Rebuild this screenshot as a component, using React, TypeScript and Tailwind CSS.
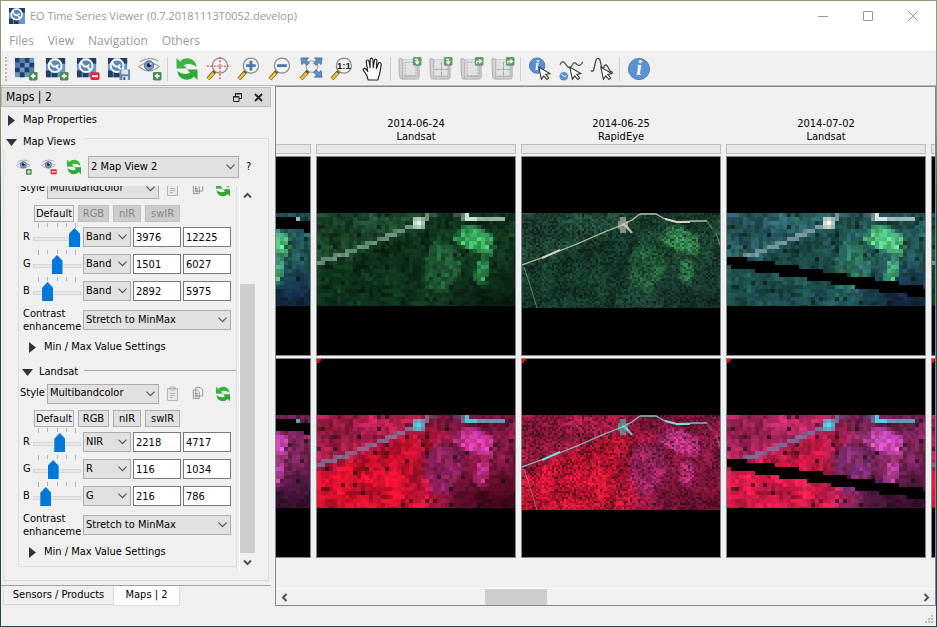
import React from "react";

/* ---------- satellite scenes ---------- */

type RGB = [number, number, number];
type Palette = "green" | "blue" | "pink" | "rose" | "fineGreen" | "finePink";

function hash(x: number, y: number, seed: number): number {
  let h = Math.imul(x + 11, 374761393) ^ Math.imul(y + 7, 668265263) ^ Math.imul(seed, 1274126177);
  h = Math.imul(h ^ (h >>> 13), 1103515245);
  h = Math.imul(h ^ (h >>> 15), 2246822519);
  return ((h ^ (h >>> 16)) >>> 0) / 4294967296;
}

function smooth(x: number, y: number, seed: number): number {
  const ix = Math.floor(x);
  const iy = Math.floor(y);
  const fx = x - ix;
  const fy = y - iy;
  const top = hash(ix, iy, seed) * (1 - fx) + hash(ix + 1, iy, seed) * fx;
  const low = hash(ix, iy + 1, seed) * (1 - fx) + hash(ix + 1, iy + 1, seed) * fx;
  return top * (1 - fy) + low * fy;
}

const mix = (a: RGB, b: RGB, t: number): RGB => [
  a[0] + (b[0] - a[0]) * t,
  a[1] + (b[1] - a[1]) * t,
  a[2] + (b[2] - a[2]) * t,
];

const clamp01 = (v: number) => Math.max(0, Math.min(1, v));

const ROAD: number[][] = [
  [0, 50], [22, 43], [60, 28], [80, 19], [100, 11], [114, 2], [126, -2], [134, -1],
  [150, 5], [160, 7], [185, 6],
];

const BRIGHT_FIELD: number[][] = [[137, 26], [148, 14], [160, 12], [170, 20], [178, 24], [178, 39], [166, 41], [155, 37], [144, 31]];
const LARGE_FIELD: number[][] = [[113, 33], [126, 27], [142, 34], [146, 52], [138, 66], [130, 80], [118, 78], [108, 62], [107, 46]];
const SMALL_FIELD: number[][] = [[160, 48], [171, 46], [172, 62], [167, 72], [158, 68]];

function polylineDistance(points: number[][], x: number, y: number, closed: boolean): number {
  let best = 999;
  const count = closed ? points.length : points.length - 1;
  for (let i = 0; i < count; i++) {
    const [ax, ay] = points[i];
    const [bx, by] = points[(i + 1) % points.length];
    const l = (bx - ax) ** 2 + (by - ay) ** 2;
    const t = clamp01(((x - ax) * (bx - ax) + (y - ay) * (by - ay)) / l);
    best = Math.min(best, Math.hypot(x - ax - t * (bx - ax), y - ay - t * (by - ay)));
  }
  return best;
}

/* 1 inside the field, falling to 0 over a few pixels around its edge */
function cover(points: number[][], x: number, y: number): number {
  let inside = false;
  for (let i = 0, j = points.length - 1; i < points.length; j = i++) {
    const [ax, ay] = points[i];
    const [bx, by] = points[j];
    if (ay > y !== by > y && x < ((bx - ax) * (y - ay)) / (by - ay) + ax) inside = !inside;
  }
  const d = polylineDistance(points, x, y, true);
  return clamp01(0.5 + (inside ? d : -d) / 5);
}

interface Colors {
  top: RGB; low: RGB; right: RGB; corner: RGB; field: RGB; bright: RGB; road: RGB; spot: RGB; noise: number;
}

const COLORS: Record<Palette, Colors> = {
  green: { top: [26, 66, 42], low: [14, 50, 26], right: [16, 50, 28], corner: [10, 32, 18], field: [34, 96, 56], bright: [64, 184, 104], road: [118, 156, 132], spot: [235, 245, 240], noise: 0.5 },
  blue: { top: [38, 88, 92], low: [28, 78, 76], right: [32, 82, 82], corner: [18, 44, 68], field: [48, 118, 100], bright: [88, 210, 140], road: [130, 160, 165], spot: [250, 252, 235], noise: 0.4 },
  pink: { top: [162, 28, 70], low: [214, 16, 46], right: [122, 22, 62], corner: [72, 8, 30], field: [142, 34, 98], bright: [224, 60, 170], road: [136, 112, 148], spot: [60, 230, 240], noise: 0.38 },
  rose: { top: [165, 36, 88], low: [212, 26, 70], right: [116, 34, 84], corner: [60, 18, 50], field: [128, 46, 118], bright: [216, 78, 190], road: [120, 116, 156], spot: [70, 235, 250], noise: 0.36 },
  fineGreen: { top: [30, 66, 50], low: [22, 58, 42], right: [26, 62, 46], corner: [22, 48, 40], field: [36, 92, 58], bright: [52, 130, 78], road: [40, 80, 54], spot: [200, 200, 185], noise: 0.6 },
  finePink: { top: [144, 24, 60], low: [194, 20, 50], right: [128, 22, 60], corner: [106, 16, 48], field: [152, 36, 96], bright: [188, 52, 126], road: [150, 34, 68], spot: [70, 200, 185], noise: 0.55 },
};

function sceneColor(palette: Palette, fine: boolean, x: number, y: number, px: number, py: number): RGB {
  const c = COLORS[palette];
  const roadY = 50 - px * 0.39;
  let col = mix(c.top, c.low, clamp01((py - roadY) / 14));
  col = mix(col, c.right, clamp01((px - 90) / 45));
  col = mix(col, c.corner, clamp01((px - 110) / 60) * clamp01((py - 48) / 30));
  const wx = px + (smooth(px / 6, py / 6, 21) - 0.5) * 5;
  const wy = py + (smooth(px / 6, py / 6, 22) - 0.5) * 5;
  col = mix(col, c.field, cover(LARGE_FIELD, wx, wy) * 0.85);
  col = mix(col, c.bright, cover(BRIGHT_FIELD, wx, wy));
  col = mix(col, c.bright, cover(SMALL_FIELD, wx, wy) * 0.6);
  const n = 1 + c.noise * (hash(x, y, 3) - 0.5) + 0.55 * (smooth(px / 11, py / 11, 9) - 0.5);
  col = [col[0] * n, col[1] * (n + 0.12 * (hash(x, y, 8) - 0.5)), col[2] * (n + 0.3 * (hash(x, y, 6) - 0.5))];
  if (fine) {
    if (hash(x, y, 31) > 0.94) col = mix(col, [8, 20, 18], 0.6);
    if (Math.hypot((px - 101) / 5, (py - 12) / 8) < 1) col = mix(col, c.spot, 0.6);
    return col;
  }
  if (hash(x, y, 31) > 0.95) col = mix(col, [8, 16, 14], 0.6);
  const d = polylineDistance(ROAD, px, py, false);
  const fade = 0.75 + 0.25 * hash(x, y, 14);
  if (d < 2.4) col = mix(col, c.road, (px > 112 && px < 144 ? 0.45 : 0.95) * fade);
  if (d < 3 && px > 146 && px < 190) col = mix(c.road, c.spot, px < 160 ? 0.75 : 0.3 * fade);
  const spot = Math.hypot(px - 101, py - 10);
  if (spot < 6.5) col = mix(c.road, c.spot, clamp01(1.1 - spot / 7));
  return col;
}

function scenePaths(palette: Palette, w: number, h: number, cell: number, stripe?: number) {
  const fine = palette === "fineGreen" || palette === "finePink";
  const groups = new Map<string, string>();
  for (let y = 0; y < h; y += cell) {
    for (let x = 0; x < w; x += cell) {
      const px = x + cell / 2;
      const py = y + cell / 2;
      const hidden = stripe !== undefined && Math.abs(py - stripe - px * 0.16) < 5.5;
      const col: RGB = hidden ? [0, 0, 0] : sceneColor(palette, fine, x, y, px, py);
      const q = col.map((v) => Math.min(255, Math.max(0, Math.round(v / 6) * 6)));
      const key = `rgb(${q[0]},${q[1]},${q[2]})`;
      groups.set(key, (groups.get(key) ?? "") + `M${x} ${y}h${cell}v${cell}h-${cell}z`);
    }
  }
  return [...groups.entries()];
}

function Scene({ palette, stripe }: { palette: Palette; stripe?: number }) {
  const fine = palette === "fineGreen" || palette === "finePink";
  const h = fine ? 95 : 93;
  const paths = scenePaths(palette, 198, h, fine ? 2 : 4, stripe);
  const line = palette === "fineGreen" ? "#d5d3bd" : "#7fd8d4";
  return (
    <svg width="198" height={h} viewBox={`0 0 198 ${h}`} className="block shrink-0" aria-hidden="true">
      <g shapeRendering="crispEdges">
        {paths.map(([fill, d]) => <path key={fill} d={d} fill={fill} />)}
      </g>
      {fine && (
        <g fill="none" stroke={line}>
          <path d="M0 52L22 44L37 38L55 31L80 20L100 12L110 7L118 1L134 1L141 5L155 9L172 8L185 8" strokeWidth="1.3" opacity=".85" />
          <path d="M20 45L38 37M143 6L155 9L168 9" strokeWidth="2" />
          <path d="M185 8L190 16M194 20L198 32M2 54L8 72L15 95" strokeWidth="1" opacity=".45" />
          <path d="M100 11L104 13L110 20" strokeWidth="2.5" opacity=".8" />
        </g>
      )}
    </svg>
  );
}

function MapTile({ palette, stripe, marker }: { palette: Palette; stripe?: number; marker?: boolean }) {
  return (
    <div className="relative h-50 w-50 shrink-0 overflow-hidden border border-[#828790] bg-black pt-14">
      <Scene palette={palette} stripe={stripe} />
      {marker && (
        <svg className="absolute top-0 left-0" width="4" height="4" aria-hidden="true">
          <path d="M0 0h4v2h-2v2h-2z" fill="#f00" />
        </svg>
      )}
    </div>
  );
}

interface Column { date?: string; sensor?: string; upper: Palette; lower: Palette; stripe?: number }

const COLUMNS: Column[] = [
  { date: "2014-06-24", sensor: "Landsat", upper: "green", lower: "pink" },
  { date: "2014-06-25", sensor: "RapidEye", upper: "fineGreen", lower: "finePink" },
  { date: "2014-07-02", sensor: "Landsat", upper: "blue", lower: "rose", stripe: 48 },
];

function MapColumn({ column }: { column: Column }) {
  return (
    <section className="flex w-50 shrink-0 flex-col">
      <header className="h-[26px] text-center leading-[13px]">
        <div>{column.date}</div>
        <div>{column.sensor}</div>
      </header>
      <div className="mt-px mb-0.5 h-2.5 border border-[#bcbcbc] bg-[#e6e6e6]" />
      <div className="flex flex-col gap-0.5">
        <MapTile palette={column.upper} stripe={column.stripe} />
        <MapTile palette={column.lower} stripe={column.stripe} marker />
      </div>
    </section>
  );
}

/* ---------- icons ---------- */

const Plus = () => (
  <g>
    <rect x="15.5" y="15.5" width="9" height="9" rx="1.5" fill="#4e8a53" />
    <path d="M20 17.5v5M17.5 20h5" stroke="#fff" strokeWidth="1.8" />
  </g>
);
const Minus = () => (
  <g>
    <rect x="15" y="16" width="9.5" height="8" rx="1.5" fill="#e8213a" />
    <path d="M16.8 20h6" stroke="#fff" strokeWidth="2" />
  </g>
);
const Checker = () => (
  <g>
    <rect x="1" y="1" width="20" height="20" fill="#6997c9" />
    <path d="M1 1h5v5H1zM11 1h5v5h-5zM6 6h5v5H6zM16 6h5v5h-5zM1 11h5v5H1zM11 11h5v5h-5zM6 16h5v5H6z" fill="#233f63" />
    <path d="M6 1h5v5H6zM1 6h5v5H1zM16 11h5v5h-5z" fill="#4f7db3" />
  </g>
);
const Clock = () => (
  <g>
    <rect x="1" y="1" width="20" height="20" fill="#6997c9" />
    <path d="M1 1h6v6H1zM14 1h7v6h-7zM1 14h5v7H1zM7 16h6v5H7z" fill="#233f63" />
    <circle cx="10.5" cy="9" r="6.7" fill="#5688bf" stroke="#fff" strokeWidth="2" />
    <path d="M5.500 5.500q2 5 6 4.500l2.500-2M11.500 10l3 3" fill="none" stroke="#fff" strokeWidth="2" />
  </g>
);
const Eye = () => (
  <g>
    <path d="M1 10Q11 2 22 10Q11 19 1 10z" fill="#fafafa" stroke="#929292" strokeWidth="1.1" />
    <path d="M2 5Q11-1 21 4" fill="none" stroke="#a2a2a2" strokeWidth="1.3" />
    <circle cx="11.5" cy="9" r="5" fill="#7599c4" stroke="#4b6d96" />
    <circle cx="11.5" cy="8.5" r="2.2" fill="#17243a" />
    <circle cx="13" cy="7" r="1" fill="#fff" />
  </g>
);
const Refresh = ({ size = 24 }: { size?: number }) => (
  <svg width={size} height={size} viewBox="0 0 24 24" aria-hidden="true">
    <path d="M1.500 1v10.500h10.500l-3-3c3.500-2.500 8.500-1.500 12.500 1.500C21.500 2 11-2 5 4.500z" fill="#3cb53c" />
    <path d="M22.500 23V12.500h-10.500l3 3c-3.500 2.500-8.500 1.500-12.500-1.500C2.500 22 13 26 19 19.500z" fill="#2fa836" />
  </svg>
);
const Lens = ({ children }: { children?: React.ReactNode }) => (
  <g>
    <path d="M9.500 14.500L2 23" stroke="#5c5030" strokeWidth="4" />
    <path d="M8 16.500L2 23" stroke="#f4c430" strokeWidth="2.6" />
    <circle cx="14.500" cy="9" r="7.900" fill="#f3f3f3" fillOpacity=".9" stroke="#8d8d8d" strokeWidth="1.300" />
    {children}
  </g>
);
const Cursor = () => <path d="M12.500 9.500v13l3.200-2.800 2.300 4.300 2.200-1.200-2.200-4.200h4.300z" fill="#fff" stroke="#333" strokeWidth="1.1" transform="rotate(-12 16 16)" />;
const Info = () => (
  <g>
    <circle cx="9.500" cy="9" r="8" fill="#5b90cf" stroke="#4677b2" />
    <text x="9.500" y="14" textAnchor="middle" fontFamily="Liberation Serif, serif" fontStyle="italic" fontWeight="bold" fontSize="15" fill="#fff">i</text>
  </g>
);
const Scroll = ({ grid, out }: { grid?: boolean; out?: boolean }) => (
  <g>
    <g opacity=".75">
      <path d="M2 3h14v18.500H4.500z" fill="#dedede" stroke="#aaa" />
      <path d="M1 4Q0 1.500 3 1.500Q6 2 5 6V20Q5 23 3 23Q1 22 1 4z" fill="#c9c9c9" stroke="#979797" />
      <path d="M6 3h14v17H6z" fill="#dedede" />
      <path d="M4 23h16q2 0 2-2V7h-2v13H6" fill="#c4c4c4" stroke="#999" />
      {grid
        ? <path d="M13 5v16M6 13h15" stroke="#888" strokeDasharray="4 1" />
        : <path d="M7.500 5v14M18.500 10v9M8 5.500h8M8 19.500h11" stroke="#888" strokeDasharray="1.500 1.500" />}
    </g>
    <rect x="15.500" y="0" width="9" height="9" rx="1.500" fill="#5f9c66" />
    <path d={out ? "M17.500 7V4.500H21M20 2.500l2.500 2L20 6.500" : "M17.500 2.500H20V6M18 4.500l2 2.500 2-2.500"} fill="none" stroke="#fff" strokeWidth="1.300" />
  </g>
);
const Floppy = () => (
  <g>
    <rect x="13" y="13" width="11" height="11" fill="#6386b0" />
    <path d="M15 13h7v5h-7zM16 20h6v4h-6z" fill="#dce3ec" />
    <path d="M17 21h2v3h-2z" fill="#555" />
  </g>
);
const FullExtent = () => (
  <g>
    <path d="M10 14L2 23" stroke="#5c5030" strokeWidth="4" />
    <path d="M8 16.500L2 23" stroke="#f4c430" strokeWidth="2.600" />
    <circle cx="13.500" cy="10" r="6" fill="#eee" stroke="#999" />
    <g fill="#5d8dc4" stroke="#40699b" strokeWidth=".8">
      <path d="M2 1h8L7.800 3.200l3 3-2.600 2.600-3-3L3 8z" />
      <path d="M24 1h-8l2.200 2.200-3 3 2.600 2.600 3-3L23 8z" />
      <path d="M24 21h-8l2.200-2.200-3-3 2.600-2.600 3 3L23 14z" />
    </g>
  </g>
);
const Hand = () => (
  <path
    d="M7.500 24L6 19 2.500 14C1.500 12 4 11 5.500 13L7 15 5.500 5C5.500 2.500 8 2.500 8.500 5L9.500 11 9.500 3C9.500.5 12 .5 12.500 3L12.800 11 14 3.500C14.500 1.500 17 2 16.500 4.500L16 12 18 7C19 5 21.500 6 21 8.500L19.500 17 17.500 24z"
    fill="#fff" stroke="#222" strokeWidth="1.200" strokeLinejoin="round"
  />
);

function Icon({ children, size = 24 }: { children: React.ReactNode; size?: number }) {
  return <svg width={size} height={size} viewBox="0 0 25 25" aria-hidden="true">{children}</svg>;
}

const GROUPS: { label: string; icon: React.ReactNode }[][] = [
  [
    { label: "Add raster", icon: <Icon><Checker /><Plus /></Icon> },
    { label: "Add time series", icon: <Icon><Clock /><Plus /></Icon> },
    { label: "Remove time series", icon: <Icon><Clock /><Minus /></Icon> },
    { label: "Save time series", icon: <Icon><Clock /><Floppy /></Icon> },
    { label: "Add map view", icon: <Icon><Eye /><Plus /></Icon> },
  ],
  [
    { label: "Refresh", icon: <Refresh /> },
    { label: "Center map", icon: <Icon><Lens /><path d="M14.500 0v24M1 9.500h24" stroke="#f04545" strokeWidth="1.400" strokeDasharray="2 1.500" /></Icon> },
    { label: "Zoom in", icon: <Icon><Lens><path d="M14.500 4v10M9.500 9h10" stroke="#4578ae" strokeWidth="3" /></Lens></Icon> },
    { label: "Zoom out", icon: <Icon><Lens><path d="M9.500 9h10" stroke="#4578ae" strokeWidth="3" /></Lens></Icon> },
    { label: "Full extent", icon: <Icon><FullExtent /></Icon> },
    { label: "Pixel scale", icon: <Icon><Lens><text x="14.500" y="12.500" textAnchor="middle" fontFamily="Liberation Sans, sans-serif" fontWeight="bold" fontSize="10" fill="#222">1:1</text></Lens></Icon> },
    { label: "Pan", icon: <Icon><Hand /></Icon> },
  ],
  [
    { label: "Import extent", icon: <Icon><Scroll /></Icon> },
    { label: "Import grid", icon: <Icon><Scroll grid /></Icon> },
    { label: "Export extent", icon: <Icon><Scroll out /></Icon> },
    { label: "Export grid", icon: <Icon><Scroll grid out /></Icon> },
  ],
  [
    { label: "Identify", icon: <Icon><Info /><Cursor /></Icon> },
    { label: "Temporal profile", icon: <Icon><path d="M1 8c3-6 5-2 7 1s4 3 6-1 4-1 5 0 3 2 6-3" fill="none" stroke="#555" strokeWidth="1.300" /><circle cx="5" cy="20" r="4.500" fill="#5b90cf" /><path d="M2.500 18l3 2.500 2-1" stroke="#fff" fill="none" /><Cursor /></Icon> },
    { label: "Spectral profile", icon: <Icon><path d="M1 14q2 2 3-1l2-9q1-4 4-2l2 8q2 3 3-1 2-2 4 2l2 4 3 1" fill="none" stroke="#444" strokeWidth="1.300" /><Cursor /></Icon> },
  ],
  [
    { label: "About", icon: <Icon><circle cx="12.500" cy="12.500" r="11" fill="#5b93d2" stroke="#4779b4" /><text x="12.500" y="19" textAnchor="middle" fontFamily="Liberation Serif, serif" fontStyle="italic" fontWeight="bold" fontSize="21" fill="#fff">i</text></Icon> },
  ],
];

/* ---------- controls ---------- */

function Select({ label, value, className }: { label: string; value: string; className: string }) {
  return (
    <div className={`relative shrink-0 ${className}`}>
      <select aria-label={label} defaultValue={value} className="block h-full w-full appearance-none border border-[#adadad] bg-[#e1e1e1] pl-0.5 pr-4 text-black outline-none">
        <option>{value}</option>
      </select>
      <svg className="pointer-events-none absolute top-1/2 right-1 -translate-y-1/2" width="9" height="6" viewBox="0 0 9 6" aria-hidden="true">
        <path d="M.5.7L4.500 4.700 8.500.7" fill="none" stroke="#555" strokeWidth="1.200" />
      </svg>
    </div>
  );
}

function Triangle({ open }: { open?: boolean }) {
  return (
    <svg width="11" height="11" viewBox="0 0 11 11" aria-hidden="true" className="shrink-0">
      <path d={open ? "M0 2h11L5.500 9z" : "M2 0v11l7-5.500z"} fill="#333" />
    </svg>
  );
}

interface Band { channel: string; band: string; min: string; max: string; pos: number }

function BandRow({ row, sensor }: { row: Band; sensor: string }) {
  const id = `${sensor}-${row.channel}`;
  const field = "h-5 w-12 shrink-0 border border-[#7a7a7a] bg-white px-0.5 outline-none";
  return (
    <div className="flex h-5 items-center gap-0.5 pl-1">
      <label htmlFor={id} className="w-2">{row.channel}</label>
      <div className="relative h-5 w-12">
        <svg className="absolute -top-1 left-0" width="48" height="6" aria-hidden="true">
          <path d="M5.500 0v5M14.500 0v4M24.500 0v4M33.500 0v4M42.500 0v5" stroke="#b8b4a8" />
        </svg>
        <input
          id={id}
          type="range"
          min={0}
          max={100}
          defaultValue={row.pos}
          className="absolute top-0.5 left-0 m-0 h-5 w-12 appearance-none bg-transparent [&::-webkit-slider-runnable-track]:h-1 [&::-webkit-slider-runnable-track]:border [&::-webkit-slider-runnable-track]:border-[#d6d6d6] [&::-webkit-slider-runnable-track]:bg-[#e7eaea] [&::-webkit-slider-thumb]:-mt-2.5 [&::-webkit-slider-thumb]:h-[19px] [&::-webkit-slider-thumb]:w-[11px] [&::-webkit-slider-thumb]:appearance-none [&::-webkit-slider-thumb]:bg-[#0078d7] [&::-webkit-slider-thumb]:[clip-path:polygon(50%_0,100%_30%,100%_100%,0_100%,0_30%)]"
        />
      </div>
      <Select label={`${id} band`} value={row.band} className="h-5 w-12" />
      <input aria-label={`${id} minimum`} defaultValue={row.min} className={field} />
      <input aria-label={`${id} maximum`} defaultValue={row.max} className={field} />
    </div>
  );
}

function SensorSection({ name, rows, presets }: { name: string; rows: Band[]; presets: boolean }) {
  return (
    <section className={`flex shrink-0 flex-col border-x border-[#dcdcdc] pb-1 ${presets ? "border-b" : "mb-px"}`}>
      <div className="flex h-5 items-center gap-1.5 pl-[3px]">
        <Triangle open />
        <h3>{name}</h3>
        <div className="mb-1 h-px flex-1 bg-[#a9a9a9]" />
      </div>
      <div className="mt-px flex h-[21px] items-center pl-px">
        <span className="w-[27px]">Style</span>
        <Select label={`${name} style`} value="Multibandcolor" className="h-5 w-28" />
        <div className="ml-1.5 flex items-center gap-[9px]">
          <button aria-label="Paste style" className="flex h-4 w-4 justify-center">
            <svg width="14" height="16" viewBox="0 0 14 16"><path d="M1.500 2.500h10v12h-10zM4 1h5v3H4zM4 7.500h5M4 9.500h5M4 11.500h3" fill="#e8e8e8" stroke="#b4b4b4" /></svg>
          </button>
          <button aria-label="Copy style" className="flex h-4 w-4 justify-center">
            <svg width="12" height="14" viewBox="0 0 14 16"><path d="M4.500 1.500h5l3 3v7h-8zM1.500 4.500h5l2 2v8h-7zM3 8.500h4M3 10.500h4M3 12.500h4" fill="#f4f4f4" stroke="#8b8b8b" /></svg>
          </button>
          <button aria-label="Refresh style" className="h-4 w-4"><Refresh size={16} /></button>
        </div>
      </div>
      <div className="mt-1.5 flex h-[17px] gap-1 pl-[15px]">
        <button className="w-10 border border-[#adadad] bg-[#eee] leading-[15px]">Default</button>
        {[["RGB", "w-[31px]"], ["nIR", "w-7"], ["swIR", "w-[35px]"]].map(([text, width]) => (
          <button key={text} disabled={!presets} className={`border border-[#adadad] bg-[#e1e1e1] leading-[15px] disabled:border-[#bfbfbf] disabled:bg-[#ccc] disabled:text-[#838383] ${width}`}>{text}</button>
        ))}
      </div>
      <div className="mt-[5px] flex flex-col gap-[7px]">
        {rows.map((row) => <BandRow key={row.channel} row={row} sensor={name} />)}
      </div>
      <div className="mt-[7px] flex h-6 items-center gap-0.5 pl-1">
        <div className="w-[58px] shrink-0 overflow-hidden leading-[13px]">Contrast<br />enhancement</div>
        <Select label={`${name} contrast enhancement`} value="Stretch to MinMax" className="h-5 w-37" />
      </div>
      <button className="mt-[5px] flex h-5 items-center gap-1.5 pl-2"><Triangle />Min / Max Value Settings</button>
    </section>
  );
}

function Arrow({ d }: { d: string }) {
  return <svg width="9" height="9" viewBox="0 0 9 9" aria-hidden="true"><path d={d} fill="none" stroke="#505050" strokeWidth="2" /></svg>;
}

function MapsPanel() {
  return (
    <aside className="flex w-[270px] shrink-0 flex-col pt-px">
      <div className="flex h-5 shrink-0 items-center border border-[#bcbcbc] bg-[#d9d9d9] pl-1 text-[12px]">
        <h2 className="flex-1">Maps | 2</h2>
        <button aria-label="Float" className="mr-3 flex">
          <svg width="9" height="9" viewBox="0 0 9 9"><path d="M2.500 3V.5h6v5H6M2 1h7M.5 3.500h5.500v5H.5zM0 4h6" fill="none" stroke="#222" /></svg>
        </button>
        <button aria-label="Close panel" className="mr-[7px] flex"><svg width="9" height="9" viewBox="0 0 9 9"><path d="M1 1l7 7M8 1L1 8" stroke="#222" strokeWidth="1.800" /></svg></button>
      </div>
      <div className="flex min-h-0 flex-1 flex-col px-0.5 pb-1">
        <button className="mt-[5px] flex h-4 shrink-0 items-center gap-1.5 pl-[3px]"><Triangle />Map Properties</button>
        <button className="relative z-10 mt-1.5 -mb-3 flex h-4 shrink-0 items-center gap-1.5 self-start bg-[#f0f0f0] pr-2 pl-[3px]"><Triangle open />Map Views</button>
        <div className="flex min-h-0 flex-1 flex-col border border-[#dcdcdc] pt-[17px]">
          <div className="flex shrink-0 items-center pl-3">
            <div className="flex gap-[9px]">
              <button aria-label="Add map view" className="h-4 w-4"><Icon size={16}><Eye /><Plus /></Icon></button>
              <button aria-label="Remove map view" className="h-4 w-4"><Icon size={16}><Eye /><Minus /></Icon></button>
              <button aria-label="Refresh map view" className="h-4 w-4"><Refresh size={16} /></button>
            </div>
            <Select label="Current map view" value="2 Map View 2" className="ml-1.5 h-[22px] w-[151px]" />
            <button className="ml-[7px]">?</button>
          </div>
          <div className="mt-2 mb-[9px] flex min-h-0 flex-1 pl-3.5">
            <div className="mb-1 flex w-[219px] flex-col justify-end overflow-hidden">
              <SensorSection
                name="RapidEye"
                presets={false}
                rows={[
                  { channel: "R", band: "Band", min: "3976", max: "12225", pos: 100 },
                  { channel: "G", band: "Band", min: "1501", max: "6027", pos: 50 },
                  { channel: "B", band: "Band", min: "2892", max: "5975", pos: 23 },
                ]}
              />
              <SensorSection
                name="Landsat"
                presets
                rows={[
                  { channel: "R", band: "NIR", min: "2218", max: "4717", pos: 58 },
                  { channel: "G", band: "R", min: "116", max: "1034", pos: 39 },
                  { channel: "B", band: "G", min: "216", max: "786", pos: 18 },
                ]}
              />
            </div>
            <div className="ml-0.5 flex w-4 flex-col items-center border-l border-white">
              <button aria-label="Scroll up" className="flex h-[18px] items-center"><Arrow d="M1 6.500L4.500 3 8 6.500" /></button>
              <div className="flex min-h-0 w-full flex-1 items-end"><div className="h-[77%] w-full bg-[#cdcdcd]" /></div>
              <button aria-label="Scroll down" className="flex h-[18px] items-center"><Arrow d="M1 2.500L4.500 6 8 2.500" /></button>
            </div>
          </div>
        </div>
      </div>
      <div role="tablist" className="flex h-[21px] shrink-0 items-start border-t border-[#a0a0a0] pl-0.5">
        <button role="tab" aria-selected="false" className="h-[19px] w-[110px] border-b border-l border-[#d9d9d9]">Sensors / Products</button>
        <button role="tab" aria-selected="true" className="h-5 w-[67px] border border-t-0 border-[#d9d9d9] bg-white">Maps | 2</button>
      </div>
    </aside>
  );
}

function MapArea() {
  return (
    <main className="ml-1 flex min-w-0 flex-1 flex-col border border-[#828790]">
      <div className="flex min-h-0 flex-1 gap-[5px] overflow-hidden pt-[30px]">
        <div className="flex w-[35px] shrink-0 justify-end overflow-hidden">
          <MapColumn column={{ upper: "blue", lower: "rose", stripe: -18 }} />
        </div>
        {COLUMNS.map((column) => <MapColumn key={column.date} column={column} />)}
        <MapColumn column={{ upper: "green", lower: "pink" }} />
      </div>
      <div className="flex h-[17px] shrink-0 items-center border-t border-white px-1">
        <button aria-label="Scroll left" className="flex"><Arrow d="M6.500 1L3 4.500 6.500 8" /></button>
        <div className="flex h-4 flex-1 pl-49"><div className="h-full w-[62px] bg-[#cdcdcd]" /></div>
        <button aria-label="Scroll right" className="flex"><Arrow d="M2.500 1L6 4.500 2.500 8" /></button>
      </div>
    </main>
  );
}

export default function App() {
  return (
    <div className="flex h-screen bg-linear-to-b from-[#8f9e70] from-20% to-[#2c4247] to-35% p-px font-['DejaVu_Sans_Condensed','DejaVu_Sans',sans-serif] text-[11px] text-black">
      <div className="flex min-w-0 flex-1 flex-col bg-[#f0f0f0]">
        <header className="shrink-0 bg-white font-['Open_Sans',sans-serif] text-[12px] text-[#999]">
          <div className="flex h-[30px] items-center pl-2">
            <svg width="16" height="16" viewBox="1 1 20 20" aria-hidden="true"><Clock /></svg>
            <h1 className="ml-[5px] flex-1 text-[11px]">EO Time Series Viewer (0.7.20181113T0052.develop)</h1>
            <button aria-label="Minimize" className="flex w-[45px] justify-center"><svg width="10" height="10"><path d="M0 5.500h10" stroke="#999" /></svg></button>
            <button aria-label="Maximize" className="flex w-[45px] justify-center"><svg width="10" height="10"><path d="M.5.5h9v9h-9z" fill="none" stroke="#999" /></svg></button>
            <button aria-label="Close" className="flex w-[46px] justify-center"><svg width="10" height="10"><path d="M0 0l10 10M10 0L0 10" stroke="#999" /></svg></button>
          </div>
          <nav className="flex h-[21px] items-center gap-3.5 border-b border-[#ededed] pl-2">
            <button>Files</button><button>View</button><button>Navigation</button><button>Others</button>
          </nav>
        </header>
        <div role="toolbar" className="flex h-[34px] shrink-0 items-center border-b border-[#b9b9b9] pl-1">
          <div className="mr-[3px] h-6 w-0.5 border-l-2 border-dotted border-[#bbb]" />
          {GROUPS.map((group, i) => (
            <div key={i} className="flex items-center">
              {i > 0 && <div className="mr-[3px] ml-0.5 h-6 w-px bg-[#cfcfcf]" />}
              {group.map((item) => (
                <button key={item.label} aria-label={item.label} className="flex w-[31px] justify-center">{item.icon}</button>
              ))}
            </div>
          ))}
        </div>
        <div className="flex min-h-0 flex-1">
          <MapsPanel />
          <MapArea />
        </div>
        <footer className="flex h-5 shrink-0 items-end justify-end p-0.5">
          <svg width="9" height="9" aria-hidden="true"><path d="M6 0h2v2h-2zM3 3h2v2h-2zM6 3h2v2h-2zM0 6h2v2h-2zM3 6h2v2h-2zM6 6h2v2h-2z" fill="#bbb" /></svg>
        </footer>
      </div>
    </div>
  );
}
